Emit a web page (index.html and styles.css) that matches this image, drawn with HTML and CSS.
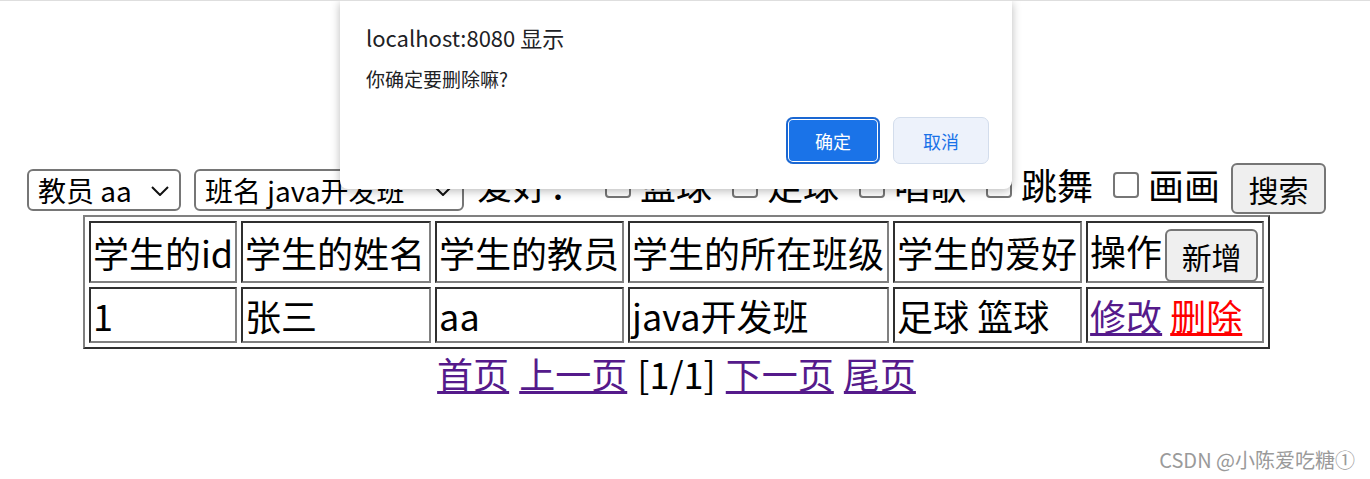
FILE: index.html
```html
<!DOCTYPE html>
<html>
<head>
  <meta charset="utf-8">
  <link rel="stylesheet" href="styles.css">
</head>
<body>
  <div class="page">
    <form class="search">
      <span class="select-wrap teacher">
        <select class="select"><option>教员 aa</option></select>
        <svg class="chevron" viewBox="0 0 18 10"><path d="M1 1 L9 9 L17 1" fill="none" stroke="#111" stroke-width="2"/></svg>
      </span>
      <span class="select-wrap klass">
        <select class="select"><option>班名 java开发班</option></select>
        <svg class="chevron" viewBox="0 0 18 10"><path d="M1 1 L9 9 L17 1" fill="none" stroke="#111" stroke-width="2"/></svg>
      </span>
      <span class="label">爱好：</span>
      <label class="hobby"><input type="checkbox"><span>篮球</span></label>
      <label class="hobby"><input type="checkbox"><span>足球</span></label>
      <label class="hobby"><input type="checkbox"><span>唱歌</span></label>
      <label class="hobby"><input type="checkbox"><span>跳舞</span></label>
      <label class="hobby"><input type="checkbox"><span>画画</span></label>
      <button type="button" class="btn search-btn">搜索</button>
    </form>

    <table class="grid">
      <tr class="head">
        <td class="c1">学生的id</td>
        <td class="c2">学生的姓名</td>
        <td class="c3">学生的教员</td>
        <td class="c4">学生的所在班级</td>
        <td class="c5">学生的爱好</td>
        <td class="c6">操作<button type="button" class="btn add-btn">新增</button></td>
      </tr>
      <tr>
        <td>1</td>
        <td>张三</td>
        <td>aa</td>
        <td>java开发班</td>
        <td>足球 篮球</td>
        <td><a href="#" class="visited">修改</a> <a href="#" class="danger">删除</a></td>
      </tr>
    </table>

    <div class="pager">
      <a href="#" class="visited">首页</a> <a href="#" class="visited">上一页</a> [1/1] <a href="#" class="visited">下一页</a> <a href="#" class="visited">尾页</a>
    </div>

    <div class="dialog">
      <div class="dialog-title">localhost:8080 显示</div>
      <div class="dialog-msg">你确定要删除嘛?</div>
      <div class="dialog-actions">
        <button type="button" class="dlg-btn ok">确定</button>
        <button type="button" class="dlg-btn cancel">取消</button>
      </div>
    </div>

    <div class="watermark">CSDN @小陈爱吃糖①</div>
  </div>
</body>
</html>
```

FILE: styles.css
```css
* {
  margin: 0;
  padding: 0;
  box-sizing: border-box;
}

body {
  width: 1370px;
  height: 479px;
  overflow: hidden;
  background: #ffffff;
  border-top: 1px solid #dedede;
  font-family: "Noto Sans CJK SC", "Noto Sans", sans-serif;
  color: #000;
}

.page {
  position: relative;
  width: 1353px;
  height: 478px;
  padding-top: 159px;
}

/* search bar */
.search {
  display: flex;
  justify-content: center;
  align-items: flex-start;
  height: 55px;
  font-size: 36px;
  line-height: 48px;
}

.select-wrap {
  position: relative;
  display: block;
  margin-top: 9px;
}

.select-wrap.teacher {
  width: 154px;
}

.select-wrap.klass {
  width: 270px;
  margin-left: 13px;
}

.select {
  appearance: none;
  -webkit-appearance: none;
  display: block;
  width: 100%;
  height: 42px;
  padding: 0 0 0 9px;
  border: 2px solid #767676;
  border-radius: 6px;
  background: #fff;
  color: #000;
  font-family: inherit;
  font-size: 28px;
  line-height: 38px;
}

.chevron {
  position: absolute;
  right: 12px;
  top: 17px;
  width: 18px;
  height: 10px;
  pointer-events: none;
}

.label {
  margin-left: 13px;
}

.hobby {
  display: flex;
  align-items: flex-start;
  margin-left: 20px;
}

.hobby input {
  appearance: none;
  -webkit-appearance: none;
  width: 26px;
  height: 26px;
  margin: 12px 9px 0 0;
  border: 2px solid #767676;
  border-radius: 4px;
  background: #fff;
}

.btn {
  border: 2px solid #767676;
  border-radius: 6px;
  background: #efefef;
  color: #000;
  font-family: inherit;
  font-size: 30px;
  line-height: 1;
}

.search-btn {
  width: 95px;
  height: 51px;
  margin: 3px 0 0 11px;
}

/* table */
.grid {
  margin: 0 auto;
  border-collapse: separate;
  border-spacing: 4px;
  border: 2px solid;
  border-color: #808080 #2f2f2f #2f2f2f #808080;
  font-size: 36px;
  line-height: 48px;
}

.grid td {
  padding: 2px;
  border: 2px solid;
  border-color: #2f2f2f #808080 #808080 #2f2f2f;
  vertical-align: middle;
  white-space: nowrap;
}

.grid .head {
  height: 62px;
}

.c1 { width: 148px; }
.c2 { width: 190px; }
.c3 { width: 189px; }
.c4 { width: 261px; }
.c5 { width: 189px; }
.c6 { width: 178px; }

.add-btn {
  width: 93px;
  height: 53px;
  margin: -4px 0 -4px 3px;
  vertical-align: middle;
}

a {
  text-decoration: underline;
}

a.visited {
  color: #551a8b;
}

a.danger {
  color: #ff0000;
}

/* pagination */
.pager {
  text-align: center;
  font-size: 36px;
  line-height: 48px;
  word-spacing: 2px;
}

/* alert dialog */
.dialog {
  position: absolute;
  top: 0;
  left: 340px;
  width: 672px;
  height: 188px;
  padding: 21px 23px 0 26px;
  background: #fff;
  border-radius: 0 0 8px 8px;
  box-shadow: 0 2px 10px rgba(0, 0, 0, 0.28);
  color: #202124;
}

.dialog-title {
  font-size: 22px;
  line-height: 30px;
}

.dialog-msg {
  margin-top: 14px;
  font-size: 19px;
  line-height: 26px;
}

.dialog-actions {
  display: flex;
  justify-content: flex-end;
  gap: 13px;
  margin-top: 25px;
}

.dlg-btn {
  height: 47px;
  border-radius: 7px;
  font-family: inherit;
  font-size: 18px;
}

.dlg-btn.ok {
  width: 94px;
  border: none;
  background: #1a73e8;
  color: #fff;
  box-shadow: inset 0 0 0 2px #1a67d2, inset 0 0 0 3px #fff;
}

.dlg-btn.cancel {
  width: 96px;
  border: 1px solid #d3ddec;
  background: #edf2fb;
  color: #1a73e8;
}

.watermark {
  position: absolute;
  right: -2px;
  top: 445px;
  font-size: 20px;
  line-height: 28px;
  color: #9a9a9a;
  white-space: nowrap;
}
```
